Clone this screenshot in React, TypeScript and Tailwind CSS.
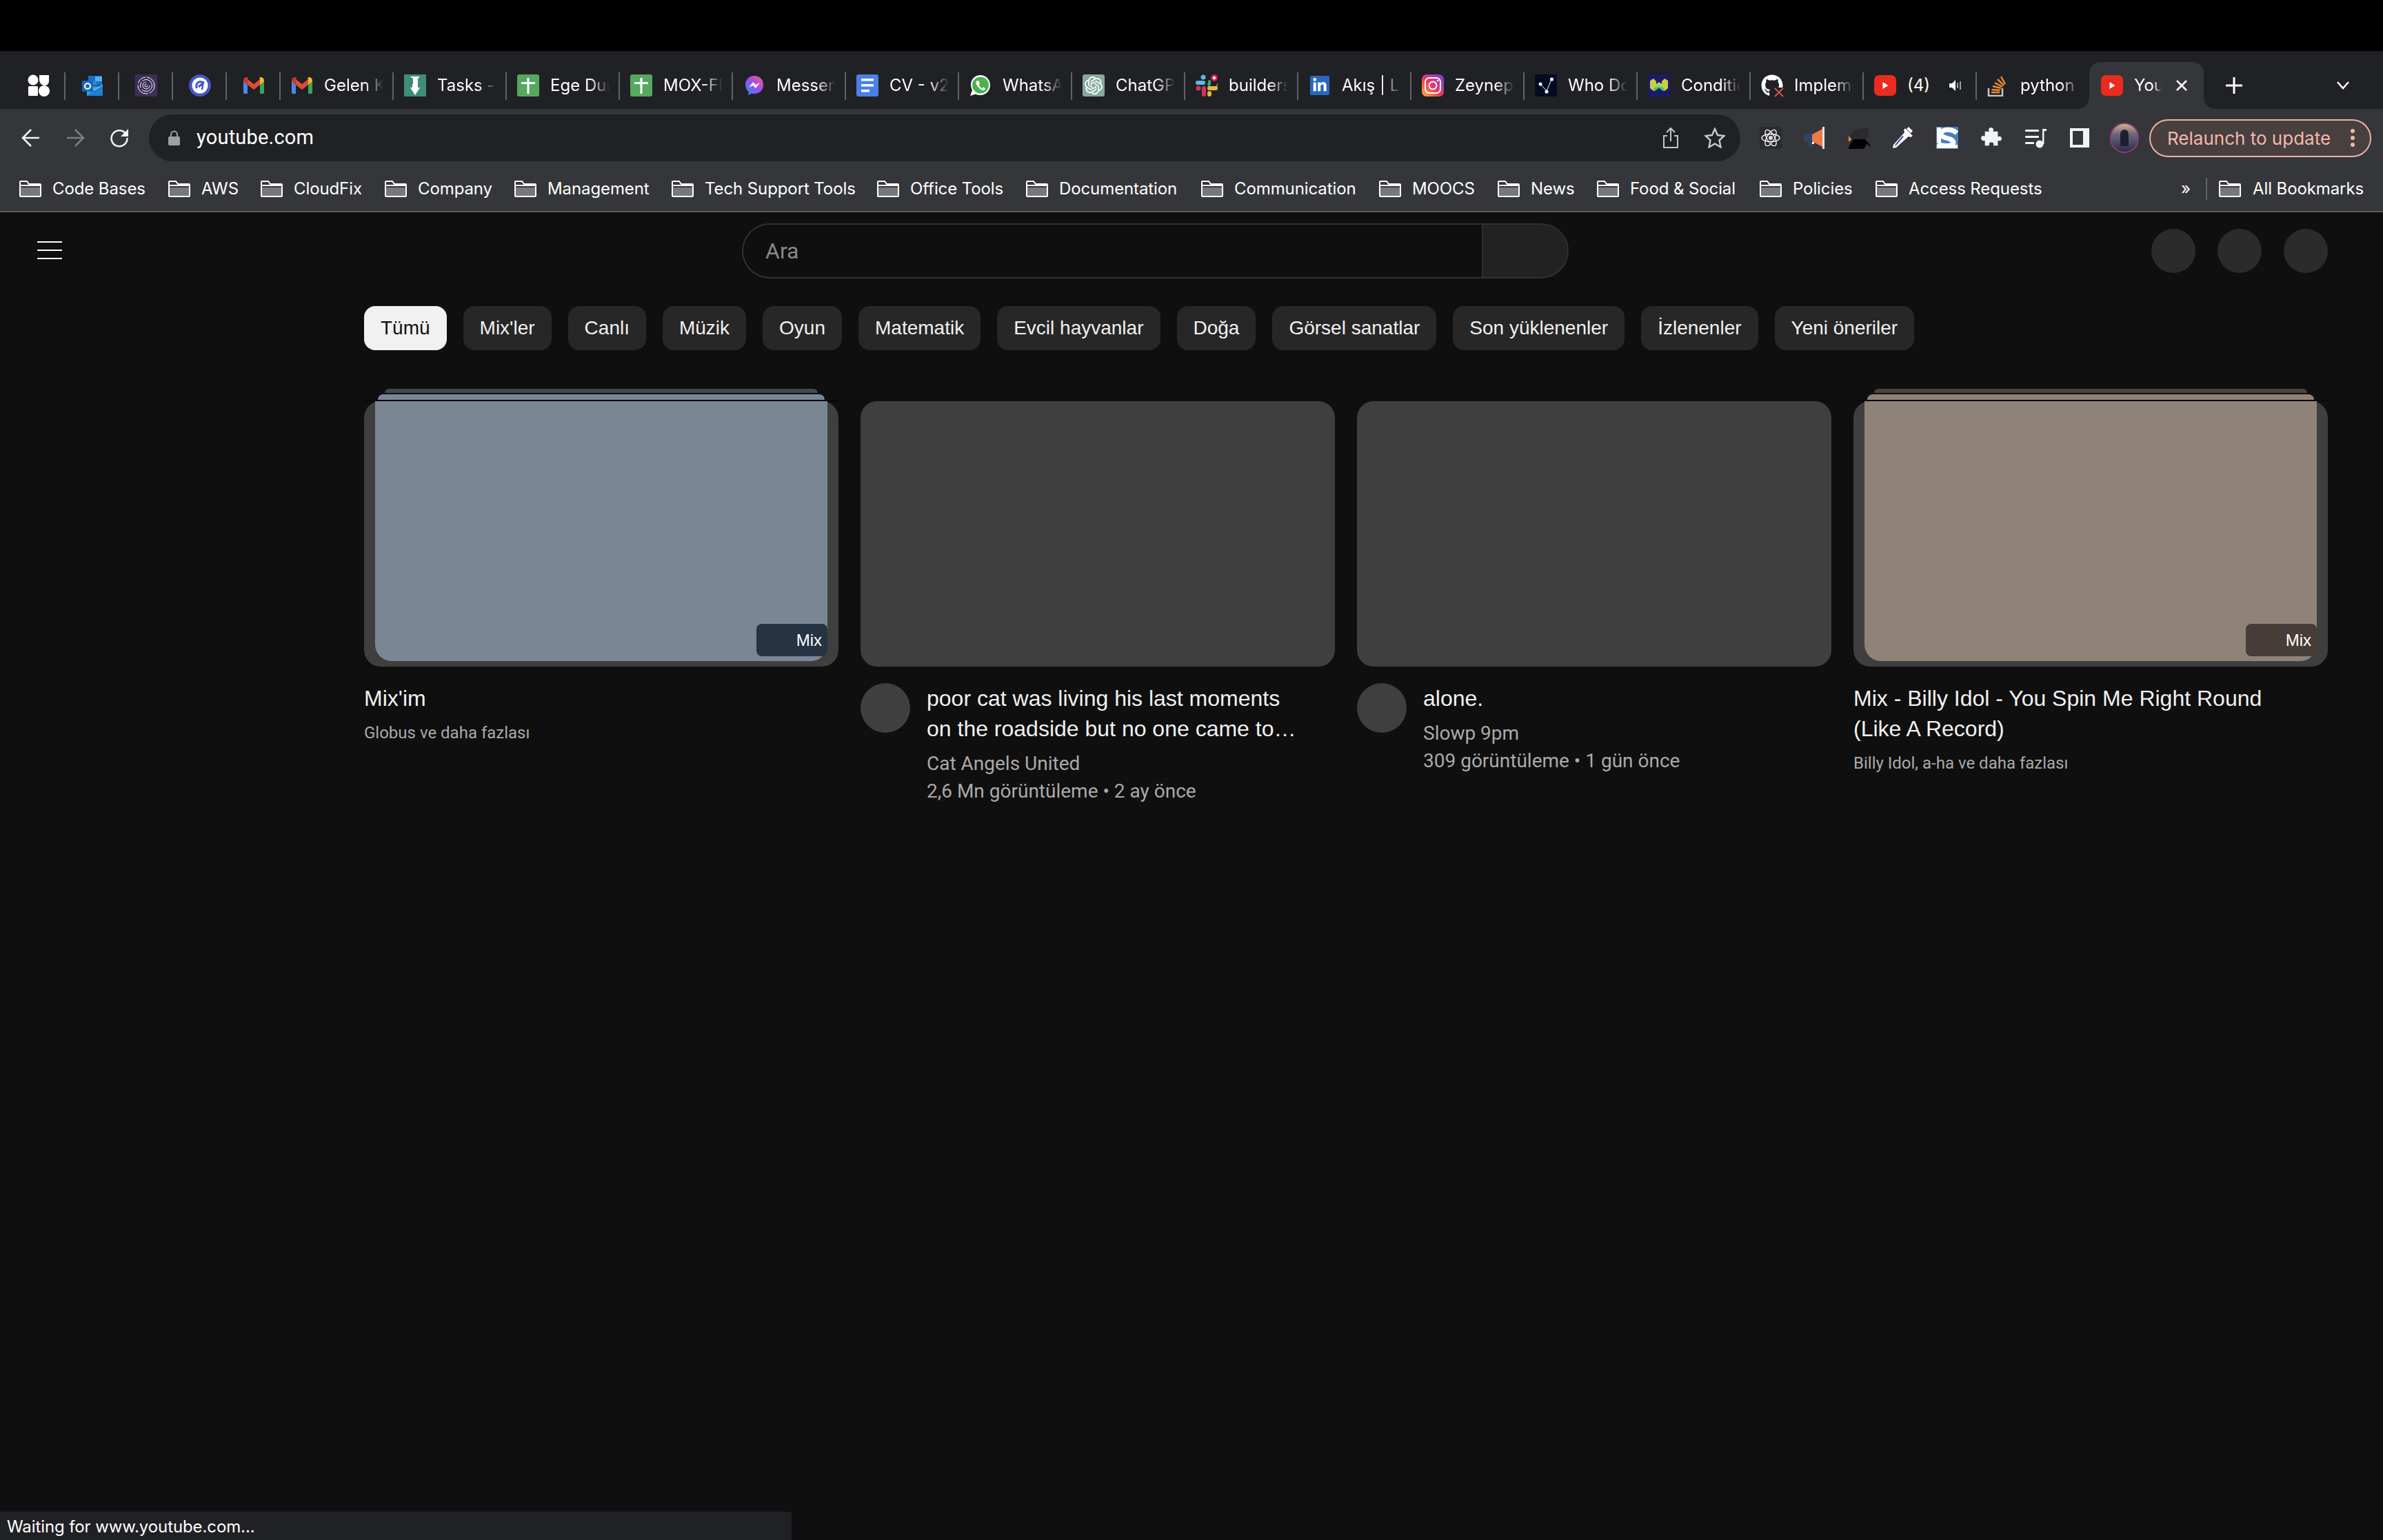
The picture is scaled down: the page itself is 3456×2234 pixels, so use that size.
import type { ReactNode } from "react";
import { FaLinkedinIn } from "react-icons/fa";
import { SiOpenai } from "react-icons/si";
import { FaGithub } from "react-icons/fa";

const Svg = ({ children, size = 32 }: { children: ReactNode; size?: number }) => (
  <svg width={size} height={size} viewBox="0 0 32 32" className="shrink-0">
    {children}
  </svg>
);

const WorkspaceIcon = () => (
  <Svg>
    <circle cx="8" cy="8" r="7.5" fill="#fff" />
    <path d="M17 1h14v9a6 6 0 0 1-6 6 8 8 0 0 1-8-8z" fill="#fff" />
    <rect x="1" y="17" width="14" height="14" rx="1.5" fill="#fff" />
    <circle cx="24" cy="24" r="8" fill="#fff" />
  </Svg>
);

const OutlookIcon = () => (
  <Svg>
    <rect x="10" y="2" width="20" height="14" fill="#1a6fc9" />
    <rect x="20" y="3" width="10" height="7" fill="#4fb4ee" />
    <rect x="15" y="9" width="7" height="7" fill="#2a8ad6" />
    <path d="M8 17h23v13a1 1 0 0 1-1 1H8z" fill="#37a0e4" />
    <path d="M8 31l12-9 11 -6v15z" fill="#1f7fd0" />
    <path d="M10 15l10 7 11-7" fill="none" stroke="#7cc4f0" strokeWidth="1.2" />
    <rect x="1" y="9" width="16" height="16" rx="1.5" fill="#1866bf" />
    <circle cx="9" cy="17" r="4" fill="none" stroke="#fff" strokeWidth="2" />
  </Svg>
);

const RingsIcon = () => (
  <Svg>
    <rect width="32" height="32" fill="#3b2f57" />
    <circle cx="16" cy="16" r="12" fill="none" stroke="#fff" strokeWidth="1" strokeDasharray="14 2 22 3" />
    <circle cx="16" cy="16" r="8.5" fill="none" stroke="#fff" strokeWidth="1" strokeDasharray="20 3 9 2" />
    <circle cx="16" cy="16" r="5" fill="none" stroke="#fff" strokeWidth="1" strokeDasharray="22 9" />
    <circle cx="16" cy="16" r="2" fill="none" stroke="#fff" strokeWidth="1" strokeDasharray="9 3" />
  </Svg>
);

const CircleEIcon = () => (
  <Svg>
    <circle cx="16" cy="16" r="16" fill="#4754c3" />
    <circle cx="16" cy="16" r="11.5" fill="#fff" />
    <path d="M11.5 20c-2-5 1-9.500 5-9.500 2 0 3.500 1 4 2L14 18" fill="none" stroke="#4754c3" strokeWidth="3" />
    <path d="M21 10l-2 12" stroke="#4754c3" strokeWidth="2.5" />
  </Svg>
);

const GmailIcon = () => (
  <svg width="30" height="24" viewBox="0 0 30 24" className="shrink-0">
    <path d="M0 5v17a2 2 0 0 0 2 2h4V11z" fill="#4a88ef" />
    <path d="M30 5v17a2 2 0 0 1-2 2h-4V11z" fill="#3fa35c" />
    <path d="M6 11l9 7 9-7V3l-9 7-9-7z" fill="#e04b3c" />
    <path d="M0 5c0-4 4-6.500 7-4l-1 2.500V11L0 6z" fill="#c3392d" />
    <path d="M30 5c0-4-4-6.500-7-4l1 2.500V11l6-5z" fill="#f2b52e" />
  </svg>
);

const SheetIcon = () => (
  <Svg>
    <rect width="32" height="32" rx="3" fill="#55a85f" />
    <rect x="14.500" y="5" width="3" height="23" fill="#fff" />
    <rect x="6" y="11" width="20" height="3" fill="#fff" />
  </Svg>
);

const TasksIcon = () => (
  <Svg>
    <rect width="32" height="32" fill="#3f8d78" />
    <path d="M9 3h14l-3 3v13h-8V6z" fill="#fff" />
    <path d="M9 19h14l-7 11z" fill="#fff" />
    <rect x="11" y="5" width="2" height="9" fill="#3f8d78" />
  </Svg>
);

const MessengerIcon = () => (
  <Svg>
    <defs>
      <linearGradient id="msgr" x1="0" y1="1" x2="1" y2="0">
        <stop offset="0" stopColor="#1f8ef5" />
        <stop offset="0.5" stopColor="#9a4df5" />
        <stop offset="1" stopColor="#f95a7a" />
      </linearGradient>
    </defs>
    <path d="M16 2C8 2 3 8 3 15c0 4 2 7.500 4.500 10v5l4.500-2.500c1.300.4 2.600.5 4 .5 8 0 13-6 13-13S24 2 16 2z" fill="url(#msgr)" />
    <path d="M8 19l6-8 4 4 6-3-6 8-4-4z" fill="#fff" />
  </Svg>
);

const DocsIcon = () => (
  <Svg>
    <rect width="32" height="32" rx="3" fill="#4a80e8" />
    <rect x="7" y="6" width="18" height="3.500" fill="#fff" />
    <rect x="7" y="14" width="18" height="3.500" fill="#fff" />
    <rect x="7" y="22" width="12" height="3.500" fill="#fff" />
  </Svg>
);

const WhatsAppIcon = () => (
  <Svg>
    <path d="M16 1C8 1 2 7 2 15c0 3 1 5.500 2 8l-3 8 8-2.500c2 1 4.500 1.500 7 1.500 8 0 14-6.500 14-14.500S24 1 16 1z" fill="#fff" />
    <circle cx="16" cy="15.500" r="12" fill="#4db14f" />
    <path d="M11 9c-2 1-2 4 0 7s6 7 9 7c2 0 3-1 3-2.500l-3-2-2 1.500c-2-1-3.500-3-4.500-5l1.500-1.500-1.500-4z" fill="#fff" />
  </Svg>
);

const ChatGptIcon = () => (
  <div className="flex h-[32px] w-[32px] shrink-0 items-center justify-center rounded-[3px] bg-[#86a99c] text-[26px] text-white">
    <SiOpenai />
  </div>
);

const SlackIcon = () => (
  <Svg>
    <rect x="0" y="9" width="14" height="6" rx="3" fill="#5db8de" />
    <circle cx="11" cy="4" r="3.500" fill="#5db8de" />
    <rect x="18" y="8" width="4" height="8" rx="2" fill="#2eaf7c" />
    <circle cx="27" cy="5" r="5" fill="#e01e3c" />
    <circle cx="27" cy="5" r="2.200" fill="#fff" />
    <path d="M18 13a5 5 0 0 0 14 0" fill="none" stroke="#2eaf7c" strokeWidth="2" />
    <rect x="17" y="17" width="15" height="6" rx="3" fill="#e8b54a" />
    <rect x="17" y="24" width="6" height="8" rx="3" fill="#e8b54a" />
    <rect x="9" y="17" width="6" height="15" rx="3" fill="#d3325c" />
    <circle cx="4" cy="20" r="3.500" fill="#d3325c" />
  </Svg>
);

const LinkedInIcon = () => (
  <div className="flex h-[28px] w-[28px] shrink-0 items-center justify-center rounded-[2px] bg-[#2a67bc] text-[22px] text-white">
    <FaLinkedinIn />
  </div>
);

const InstagramIcon = () => (
  <Svg>
    <defs>
      <linearGradient id="insta" x1="0" y1="1" x2="1" y2="0">
        <stop offset="0" stopColor="#fdb53a" />
        <stop offset="0.45" stopColor="#f0385c" />
        <stop offset="1" stopColor="#6a3ff0" />
      </linearGradient>
    </defs>
    <rect width="32" height="32" rx="7" fill="url(#insta)" />
    <rect x="5" y="5" width="22" height="22" rx="6" fill="none" stroke="#fff" strokeWidth="2" />
    <circle cx="16" cy="16" r="5.500" fill="none" stroke="#fff" strokeWidth="2" />
    <circle cx="23" cy="9" r="1.300" fill="#fff" />
  </Svg>
);

const GraphIcon = () => (
  <Svg>
    <rect width="32" height="32" fill="#020b22" />
    <path d="M8 14l9 10 7-17" fill="none" stroke="#fff" strokeWidth="1" />
    <circle cx="8" cy="14" r="2.500" fill="#fff" />
    <circle cx="17" cy="25" r="2.500" fill="#fff" />
    <circle cx="24.500" cy="7" r="2.500" fill="#fff" />
  </Svg>
);

const ConditionIcon = () => (
  <Svg>
    <rect width="32" height="32" fill="#1c1a68" />
    <path d="M3 9l5-3 4 4v4l4-3 4 3v-4l4-4 5 3v11l-5 4-3-1-5-4-5 4-3 1-5-4z" fill="#c7cf3c" />
    <path d="M8 24c1-10 15-10 16 0l-4-1c-2-4-6-4-8 0z" fill="#46c26a" />
    <path d="M11 18c2-4 8-4 10 0l-2 1c-2-2-4-2-6 0z" fill="#7fd9a0" />
  </Svg>
);

const GithubBrokenIcon = () => (
  <div className="relative h-[32px] w-[32px] shrink-0 text-[32px] text-white">
    <FaGithub />
    <div className="absolute right-[-2px] bottom-[-2px] h-[15px] w-[15px] bg-[#202124]" />
    <svg width="14" height="14" viewBox="0 0 14 14" className="absolute right-[-1px] bottom-[-1px]">
      <path d="M1 1l12 12M13 1L1 13" stroke="#d9534f" strokeWidth="2" />
    </svg>
  </div>
);

const YoutubeIcon = () => (
  <svg width="32" height="30" viewBox="0 0 32 30" className="shrink-0">
    <rect width="32" height="30" rx="7" fill="#ea2b1f" />
    <path d="M12.500 10l8 5-8 5z" fill="#fff" />
  </svg>
);

const StackIcon = () => (
  <Svg>
    <path d="M2 20v11h20V20" fill="none" stroke="#c7c7c7" strokeWidth="2.500" />
    <path d="M6 26h12M6.500 22l12 1M8 17l12 3M11 12l11 6M15 7l9 9M20 3l6 11" stroke="#ee8a32" strokeWidth="2.500" fill="none" />
  </Svg>
);

const SpeakerIcon = () => (
  <svg width="20" height="20" viewBox="0 0 20 20" className="shrink-0">
    <path d="M1 7h4l5-5v16l-5-5H1z" fill="#fff" />
    <rect x="12" y="6" width="2" height="8" fill="#9aa0a6" />
    <rect x="16" y="4" width="2" height="12" fill="#9aa0a6" />
  </svg>
);

const Folder = () => (
  <svg width="32" height="24" viewBox="0 0 32 24" className="shrink-0">
    <path d="M1 10h30v12a1 1 0 0 1-1 1H2a1 1 0 0 1-1-1z" fill="#77787a" />
    <path d="M1 2a1 1 0 0 1 1-1h9l3 4h16a1 1 0 0 1 1 1v16a1 1 0 0 1-1 1H2a1 1 0 0 1-1-1z M1 7h30" fill="none" stroke="#fff" strokeWidth="2" />
  </svg>
);

const ReactExt = () => (
  <div className="flex h-[32px] w-[32px] items-center justify-center rounded-[3px] bg-[#2a2b2e]">
    <svg width="30" height="30" viewBox="0 0 30 30" fill="none" stroke="#fff" strokeWidth="1.300">
      <ellipse cx="15" cy="15" rx="13" ry="5.500" />
      <ellipse cx="15" cy="15" rx="13" ry="5.500" transform="rotate(60 15 15)" />
      <ellipse cx="15" cy="15" rx="13" ry="5.500" transform="rotate(120 15 15)" />
      <circle cx="15" cy="15" r="3" fill="#ddd" stroke="none" />
    </svg>
  </div>
);

const MegaphoneExt = () => (
  <Svg>
    <path d="M12 9L1 11a5 5 0 0 0 0 10l6 1v7h5v-7z" fill="#2c4564" />
    <path d="M12 11l15-8v26l-15-8z" fill="#ef7a45" />
    <rect x="27" y="0" width="3" height="32" fill="#dfe7ee" />
    <rect x="12" y="22" width="3" height="3" fill="#fff" />
  </Svg>
);

const ShapeExt = () => (
  <Svg>
    <path d="M1 14L8 6c5-4 14-4 22-4v12l-5 4H8z" fill="#2a2b2e" />
    <path d="M1 13l4 5-4 4z" fill="#f0902f" />
    <path d="M8 18h17l7 8v3l-4-5-5 8H1c0-4 4-10 7-14z" fill="#000" />
  </Svg>
);

const DropperExt = () => (
  <Svg>
    <path d="M20 6L2 26l-1 5 5-1L26 12z" fill="#fff" />
    <path d="M17 14L6 27l-2 1 1-3 10-12z" fill="#3a4fc0" />
    <path d="M19 2l11 11-3 2-3-1-6-6-1-3zM24 0l6 6-3 3-6-6z" fill="#fff" />
  </Svg>
);

const SExt = () => (
  <Svg>
    <rect width="32" height="32" fill="#4a7fb8" />
    <rect x="1" y="26" width="30" height="5" fill="#fff" />
    <rect x="1" y="1" width="6" height="22" fill="#fff" />
    <path d="M30 9C22 2 7 3 7 10c0 8 18 5 18 13 0 5-14 6-23 2" fill="none" stroke="#fff" strokeWidth="7" />
  </Svg>
);

const PuzzleExt = () => (
  <Svg>
    <path d="M12 2a4 4 0 0 1 7 0c.6 1.200 0 2.500-.5 4H26v8c2-1 6-1 6 3s-4 4-6 3v8h-7c1-2 1-5-3-5s-4 3-3 5H6v-8c-2 1-6 0-6-3.500S4 12 6 13.500V6h7c-.6-1.500-1.500-2.500-1-4z" fill="#f1f3f4" transform="translate(1 1) scale(.94)" />
  </Svg>
);

const QueueExt = () => (
  <Svg>
    <rect x="1" y="4" width="20" height="3" rx="1" fill="#f1f3f4" />
    <rect x="1" y="13" width="20" height="3" rx="1" fill="#f1f3f4" />
    <rect x="1" y="22" width="13" height="3" rx="1" fill="#f1f3f4" />
    <circle cx="22" cy="25" r="5.500" fill="#f1f3f4" />
    <path d="M26 25V3h6v3h-3.500v19z" fill="#f1f3f4" />
  </Svg>
);

const SidePanelExt = () => (
  <svg width="28" height="28" viewBox="0 0 28 28" className="shrink-0">
    <path d="M0 0h28v28H0zM4 4v20h15V4z" fill="#f1f3f4" fillRule="evenodd" />
  </svg>
);

const pinned = [<WorkspaceIcon />, <OutlookIcon />, <RingsIcon />, <CircleEIcon />, <GmailIcon />];

const tabs: { title: string; icon: ReactNode; speaker?: boolean; width: string }[] = [
  { title: "Gelen Kutusu", icon: <GmailIcon />, width: "w-[164px]" },
  { title: "Tasks -", icon: <TasksIcon />, width: "w-[164px]" },
  { title: "Ege Durmaz", icon: <SheetIcon />, width: "w-[164px]" },
  { title: "MOX-FI", icon: <SheetIcon />, width: "w-[164px]" },
  { title: "Messenger", icon: <MessengerIcon />, width: "w-[164px]" },
  { title: "CV - v2", icon: <DocsIcon />, width: "w-[164px]" },
  { title: "WhatsApp", icon: <WhatsAppIcon />, width: "w-[164px]" },
  { title: "ChatGPT", icon: <ChatGptIcon />, width: "w-[164px]" },
  { title: "builders", icon: <SlackIcon />, width: "w-[164px]" },
  { title: "Akış | Li", icon: <LinkedInIcon />, width: "w-[164px]" },
  { title: "Zeynep", icon: <InstagramIcon />, width: "w-[164px]" },
  { title: "Who Do", icon: <GraphIcon />, width: "w-[164px]" },
  { title: "Conditio", icon: <ConditionIcon />, width: "w-[164px]" },
  { title: "Impleme", icon: <GithubBrokenIcon />, width: "w-[164px]" },
  { title: "(4) I", icon: <YoutubeIcon />, speaker: true, width: "w-[164px]" },
  { title: "python", icon: <StackIcon />, width: "w-[163px]" },
];

const bookmarks = [
  { name: "Code Bases", width: "w-[216px]" },
  { name: "AWS", width: "w-[134px]" },
  { name: "CloudFix", width: "w-[180px]" },
  { name: "Company", width: "w-[188px]" },
  { name: "Management", width: "w-[228px]" },
  { name: "Tech Support Tools", width: "w-[298px]" },
  { name: "Office Tools", width: "w-[216px]" },
  { name: "Documentation", width: "w-[254px]" },
  { name: "Communication", width: "w-[258px]" },
  { name: "MOOCS", width: "w-[172px]" },
  { name: "News", width: "w-[144px]" },
  { name: "Food & Social", width: "w-[236px]" },
  { name: "Policies", width: "w-[168px]" },
  { name: "Access Requests", width: "w-[300px]" },
];

const chips = ["Mix'ler", "Canlı", "Müzik", "Oyun", "Matematik", "Evcil hayvanlar", "Doğa", "Görsel sanatlar", "Son yüklenenler", "İzlenenler", "Yeni öneriler"];

const TabStrip = () => (
  <div className="flex h-[84px] items-end bg-[#202124] pl-[17px]">
    {pinned.map((icon, i) => (
      <div key={i} className="flex h-[68px] w-[78px] items-center justify-center border-r-0 relative">
        {icon}
        <div className="absolute top-[15px] right-0 h-[40px] w-[2px] bg-[#5f6368]" />
      </div>
    ))}
    {tabs.map((tab, i) => (
      <div key={tab.title} className={`${tab.width} relative flex h-[68px] items-center pl-[15px]`}>
        <div className="flex w-[32px] justify-center">{tab.icon}</div>
        <div className={`ml-[16px] overflow-hidden whitespace-nowrap text-[24px] leading-[32px] text-white ${tab.speaker ? "w-[40px]" : "w-[86px] [mask-image:linear-gradient(to_right,black_68%,transparent)]"}`}>
          {tab.title}
        </div>
        {tab.speaker && <div className="ml-[20px]"><SpeakerIcon /></div>}
        {i < tabs.length - 1 && <div className="absolute top-[15px] right-0 h-[40px] w-[2px] bg-[#5f6368]" />}
      </div>
    ))}
    <div className="relative flex h-[68px] w-[166px] items-center rounded-t-[16px] bg-[#35363a] pl-[17px]">
      <div className="absolute bottom-0 left-[-16px] h-[16px] w-[16px] bg-[radial-gradient(circle_at_0_0,#202124_15.500px,#35363a_16px)]" />
      <div className="absolute right-[-16px] bottom-0 h-[16px] w-[16px] bg-[radial-gradient(circle_at_100%_0,#202124_15.500px,#35363a_16px)]" />
      <YoutubeIcon />
      <div className="ml-[16px] w-[40px] overflow-hidden whitespace-nowrap text-[24px] leading-[32px] text-white [mask-image:linear-gradient(to_right,black_70%,transparent)]">You</div>
      <svg width="18" height="18" viewBox="0 0 18 18" className="ml-[20px]">
        <path d="M2 2l14 14M16 2L2 16" stroke="#fff" strokeWidth="2.500" />
      </svg>
    </div>
    <div className="flex h-[68px] items-center pl-[32px]">
      <svg width="24" height="24" viewBox="0 0 24 24">
        <path d="M12 0v24M0 12h24" stroke="#fff" strokeWidth="3" />
      </svg>
      <svg width="20" height="12" viewBox="0 0 20 12" className="ml-[136px]">
        <path d="M2 1l8 9 8-9" fill="none" stroke="#fff" strokeWidth="2.500" />
      </svg>
    </div>
  </div>
);

const Toolbar = () => (
  <div className="flex h-[82px] items-center bg-[#35363a] pt-[2px] pl-[31px]">
    <svg width="28" height="28" viewBox="0 0 28 28" fill="none" stroke="#f1f3f4" strokeWidth="2.500">
      <path d="M26 14H3M14 2L2 14l12 12" />
    </svg>
    <svg width="28" height="28" viewBox="0 0 28 28" fill="none" stroke="#7c7e82" strokeWidth="2.500" className="ml-[36px]">
      <path d="M2 14h23M14 2l12 12-12 12" />
    </svg>
    <svg width="28" height="28" viewBox="0 0 28 28" fill="none" stroke="#f1f3f4" strokeWidth="2.500" className="ml-[36px]">
      <path d="M24 9A11.500 11.500 0 1 0 25.500 14" />
      <path d="M27 1v11H16z" fill="#f1f3f4" stroke="none" />
    </svg>
    <div className="ml-[29px] flex h-[68px] w-[2308px] items-center rounded-full bg-[#202124] pr-[22px] pl-[28px]">
      <svg width="17" height="22" viewBox="0 0 17 22" className="shrink-0">
        <path d="M4 9V6a4.500 4.500 0 0 1 9 0v3" fill="none" stroke="#9aa0a6" strokeWidth="2" />
        <rect y="9" width="17" height="13" rx="2" fill="#9aa0a6" />
      </svg>
      <span className="ml-[24px] font-['Roboto',sans-serif] text-[29px] tracking-[0.2px] text-white">youtube.com</span>
      <svg width="24" height="32" viewBox="0 0 24 32" fill="none" stroke="#c4c7c5" strokeWidth="2" className="ml-auto">
        <path d="M7 13H2v17h20V13h-5M12 21V2M6 8l6-6 6 6" />
      </svg>
      <svg width="30" height="30" viewBox="0 0 30 30" fill="none" stroke="#c4c7c5" strokeWidth="2.500" className="ml-[37px]">
        <path d="M15 2l4 9 9.500 1-7 6.500 2 10-8.500-5-8.500 5 2-10-7-6.500L11 11z" />
      </svg>
    </div>
    <div className="ml-[12px] flex">
      {[<ReactExt />, <MegaphoneExt />, <ShapeExt />, <DropperExt />, <SExt />, <PuzzleExt />, <QueueExt />, <SidePanelExt />].map((icon, i) => (
        <div key={i} className="flex w-[64px] items-center justify-center">
          {icon}
        </div>
      ))}
    </div>
    <div className="ml-[12px] h-[44px] w-[42px] rounded-full border-[2px] border-[#8e3c78] bg-[linear-gradient(#d6b37c_0%,#6c6a7c_35%,#2b2c4a_100%)] p-[8px]">
      <div className="mx-auto h-full w-[12px] rounded-t-full bg-[#1e1f33]" />
    </div>
    <div className="ml-[15px] flex h-[55px] w-[322px] items-center rounded-full border-[2px] border-[#eeb1a8] bg-[#483f3f] pl-[24px]">
      <span className="text-[26px] whitespace-nowrap text-[#f2b8ae]">Relaunch to update</span>
      <svg width="8" height="28" viewBox="0 0 8 28" fill="#f2b8ae" className="ml-[28px]">
        <circle cx="4" cy="4" r="3" />
        <circle cx="4" cy="14" r="3" />
        <circle cx="4" cy="24" r="3" />
      </svg>
    </div>
  </div>
);

const BookmarkBar = () => (
  <div className="flex h-[68px] items-center border-b-[2px] border-[#5c5d60] bg-[#35363a] pt-[2px] pl-[28px] text-[24px] tracking-[-0.1px] whitespace-nowrap text-white">
    {bookmarks.map((b) => (
      <div key={b.name} className={`flex items-center gap-[16px] ${b.width}`}>
        <Folder />
        <span>{b.name}</span>
      </div>
    ))}
    <span className="ml-[143px] w-[36px] text-[24px]">»</span>
    <div className="h-[32px] w-[2px] bg-[#5f6368]" />
    <div className="ml-[17px] flex items-center gap-[17px]">
      <Folder />
      <span>All Bookmarks</span>
    </div>
  </div>
);

const Masthead = () => (
  <div className="flex h-[112px] items-center pl-[54px]">
    <div className="-mt-[2px] flex w-[36px] flex-col gap-[10px]">
      <div className="h-[2px] bg-white" />
      <div className="h-[2px] bg-white" />
      <div className="h-[2px] bg-white" />
    </div>
    <div className="ml-[986px] flex h-[80px] w-[1199px]">
      <div className="flex flex-1 items-center rounded-l-full border-[2px] border-r-0 border-[#303030] pl-[32px] text-[32px] text-[#888888]">Ara</div>
      <div className="w-[126px] rounded-r-full border-[2px] border-[#303030] bg-[#222222]" />
    </div>
    <div className="ml-auto flex gap-[32px] pr-[80px]">
      <div className="h-[64px] w-[64px] rounded-full bg-[#2b2b2b]" />
      <div className="h-[64px] w-[64px] rounded-full bg-[#2b2b2b]" />
      <div className="h-[64px] w-[64px] rounded-full bg-[#2b2b2b]" />
    </div>
  </div>
);

const Chips = () => (
  <div className="mt-[24px] ml-[528px] flex gap-[24px] font-['Liberation_Sans',sans-serif]">
    <div className="flex h-[64px] items-center rounded-[16px] bg-[#f1f1f1] px-[24px] text-[28px] text-[#0f0f0f]">Tümü</div>
    {chips.map((c) => (
      <div key={c} className="flex h-[64px] items-center rounded-[16px] bg-[#272727] px-[24px] text-[28px] whitespace-nowrap text-[#f1f1f1]">
        {c}
      </div>
    ))}
  </div>
);

const Thumb = ({ mix }: { mix?: "blue" | "tan" }) => (
  <div className="relative h-[385px] rounded-[24px] bg-[#3f3f3f]">
    {mix === "blue" && (
      <>
        <div className="absolute -top-[18px] right-[30px] left-[30px] h-[6px] rounded-t-[16px] bg-[#414a52]" />
        <div className="absolute -top-[10px] right-[20px] left-[20px] h-[8px] rounded-t-[16px] bg-[#7a8694]" />
        <div className="absolute -top-[2px] right-0 left-0 h-[2px] bg-[#070809]" />
        <div className="absolute top-0 right-[16px] bottom-[8px] left-[16px] rounded-b-[24px] bg-[#7a8694]" />
        <div className="absolute right-[16px] bottom-[15px] flex h-[47px] w-[103px] items-center justify-end rounded-[8px] bg-[#263342] pr-[8px] font-['Liberation_Sans',sans-serif] text-[24px] text-white">Mix</div>
      </>
    )}
    {mix === "tan" && (
      <>
        <div className="absolute -top-[18px] right-[30px] left-[30px] h-[6px] rounded-t-[16px] bg-[#4b4340]" />
        <div className="absolute -top-[10px] right-[20px] left-[20px] h-[8px] rounded-t-[16px] bg-[#8f8277]" />
        <div className="absolute -top-[2px] right-0 left-0 h-[2px] bg-[#070809]" />
        <div className="absolute top-0 right-[16px] bottom-[8px] left-[16px] rounded-b-[24px] bg-[#8f8277]" />
        <div className="absolute right-[16px] bottom-[15px] flex h-[47px] w-[103px] items-center justify-end rounded-[8px] bg-[#463c38] pr-[8px] font-['Liberation_Sans',sans-serif] text-[24px] text-white">Mix</div>
      </>
    )}
  </div>
);

const Feed = () => (
  <div className="mt-[74px] mr-[80px] ml-[528px] grid grid-cols-4 gap-[32px]">
    <div>
      <Thumb mix="blue" />
      <div className="mt-[24px] font-['Liberation_Sans',sans-serif] text-[32px] leading-[44px] text-[#f1f1f1]">Mix'im</div>
      <div className="mt-[10px] text-[24px] leading-[36px] text-[#aaaaaa]">Globus ve daha fazlası</div>
    </div>
    <div>
      <Thumb />
      <div className="mt-[24px] flex">
        <div className="h-[72px] w-[72px] shrink-0 rounded-full bg-[#3f3f3f]" />
        <div className="ml-[24px] pr-[48px]">
          <div className="line-clamp-2 font-['Liberation_Sans',sans-serif] text-[32px] leading-[44px] text-[#f1f1f1]">poor cat was living his last moments on the roadside but no one came to help him</div>
          <div className="mt-[9px] text-[28px] leading-[40px] text-[#aaaaaa]">Cat Angels United</div>
          <div className="text-[28px] leading-[40px] text-[#aaaaaa]">2,6 Mn görüntüleme • 2 ay önce</div>
        </div>
      </div>
    </div>
    <div>
      <Thumb />
      <div className="mt-[24px] flex">
        <div className="h-[72px] w-[72px] shrink-0 rounded-full bg-[#3f3f3f]" />
        <div className="ml-[24px] pr-[48px]">
          <div className="font-['Liberation_Sans',sans-serif] text-[32px] leading-[44px] text-[#f1f1f1]">alone.</div>
          <div className="mt-[9px] text-[28px] leading-[40px] text-[#aaaaaa]">Slowp 9pm</div>
          <div className="text-[28px] leading-[40px] text-[#aaaaaa]">309 görüntüleme • 1 gün önce</div>
        </div>
      </div>
    </div>
    <div>
      <Thumb mix="tan" />
      <div className="mt-[24px] pr-[48px] font-['Liberation_Sans',sans-serif] text-[32px] leading-[44px] text-[#f1f1f1]">Mix - Billy Idol - You Spin Me Right Round (Like A Record)</div>
      <div className="mt-[10px] text-[24px] leading-[36px] text-[#aaaaaa]">Billy Idol, a-ha ve daha fazlası</div>
    </div>
  </div>
);

const App = () => {
  return (
    <div className="relative h-[2234px] w-[3456px] overflow-hidden bg-[#0f0f0f]">
      <div className="h-[74px] bg-black" />
      <div className="font-['Inter',sans-serif]">
        <TabStrip />
        <Toolbar />
        <BookmarkBar />
      </div>
      <div className="font-['Roboto',sans-serif]">
        <Masthead />
        <Chips />
        <Feed />
      </div>
      <div className="absolute bottom-0 left-0 flex h-[41px] w-[1148px] items-center rounded-tr-[4px] bg-[#202124] pt-[2px] pl-[10px] font-['Inter',sans-serif] text-[24px] tracking-[-0.1px] text-white">
        Waiting for www.youtube.com...
      </div>
    </div>
  );
};

export default App;
